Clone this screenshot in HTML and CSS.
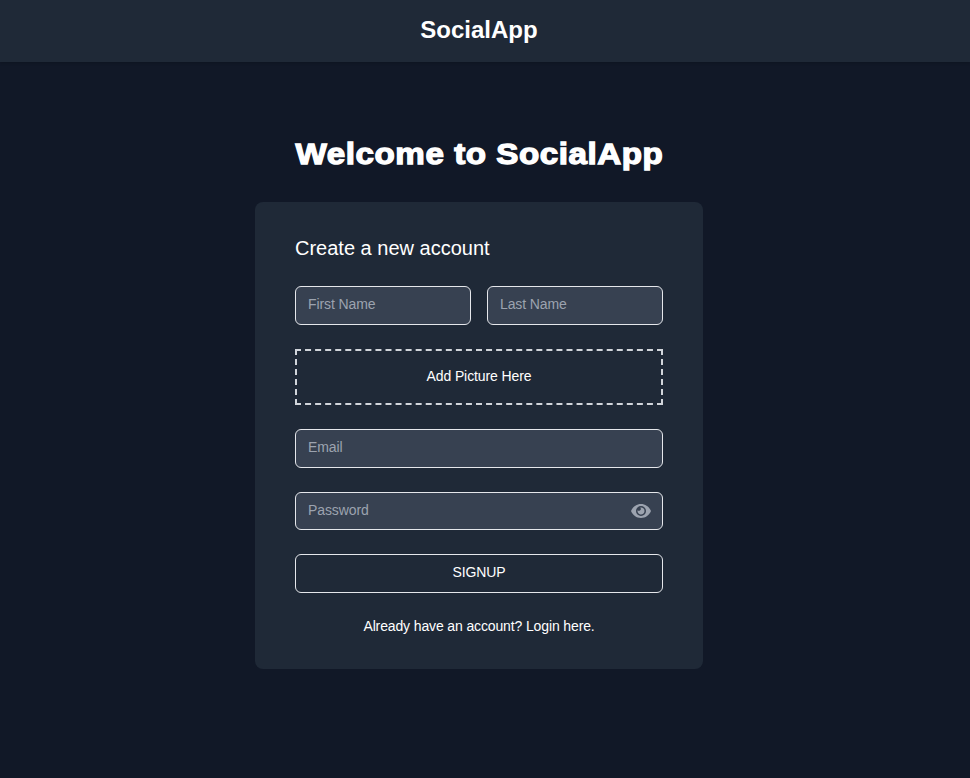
FILE: index.html
```html
<!DOCTYPE html>
<html lang="en">
<head>
<meta charset="utf-8">
<title>SocialApp</title>
<link rel="stylesheet" href="styles.css">
</head>
<body>
<header class="topbar"><span class="brand">SocialApp</span></header>
<main class="page">
  <h1 class="welcome">Welcome to SocialApp</h1>
  <form class="card">
    <h2 class="card-title">Create a new account</h2>
    <div class="names">
      <input class="field" type="text" placeholder="First Name">
      <input class="field" type="text" placeholder="Last Name">
    </div>
    <div class="dropzone">Add Picture Here</div>
    <input class="field" type="email" placeholder="Email">
    <div class="password">
      <input class="field" type="password" placeholder="Password">
      <svg class="eye" viewBox="0 0 20 14" aria-hidden="true">
        <path fill-rule="evenodd" d="M10 0C5.500 0 1.700 2.800 0 7c1.700 4.200 5.500 7 10 7s8.300-2.800 10-7C18.300 2.800 14.500 0 10 0Zm0 12A5 5 0 1 1 10 2a5 5 0 0 1 0 10Z"/>
        <path d="M10 3.500a3.500 3.500 0 1 1-3.400 2.700A1.700 1.700 0 0 0 9.200 3.600Z"/>
      </svg>
    </div>
    <button class="signup" type="button">SIGNUP</button>
    <a class="login">Already have an account? Login here.</a>
  </form>
</main>
</body>
</html>
```
FILE: styles.css
```css
* {
  box-sizing: border-box;
}

body {
  margin: 0;
  min-height: 778px;
  background: #111827;
  color: #fff;
  font: 14px/20px "Liberation Sans", Arial, sans-serif;
}

.topbar {
  height: 62px;
  padding: 14px 12px 0 0;
  background: #1f2937;
  box-shadow: 0 1px 3px rgba(0, 0, 0, 0.2);
  text-align: center;
}

.brand {
  font-size: 24px;
  line-height: 32px;
  font-weight: 700;
}

.page {
  display: flex;
  flex-direction: column;
  align-items: center;
  padding: 73.5px 12px 0 0;
}

.welcome {
  margin: 0 0 30.5px;
  padding-left: 1px;
  font-size: 30px;
  line-height: 36px;
  font-weight: 900;
  letter-spacing: 0.5px;
  -webkit-text-stroke: 1.3px #fff;
  transform: scaleX(1.105);
  white-space: nowrap;
}

.card {
  display: flex;
  flex-direction: column;
  gap: 24px;
  width: 448px;
  padding: 32px 40px;
  border-radius: 8px;
  background: #1f2937;
}

.card-title {
  margin: 0;
  font-size: 20px;
  line-height: 28px;
  font-weight: 400;
}

.names {
  display: grid;
  grid-template-columns: 1fr 1fr;
  gap: 16px;
}

.field,
.signup {
  display: block;
  width: 100%;
  height: 38.5px;
  border: 1px solid #e5e7eb;
  border-radius: 6px;
  font: inherit;
  letter-spacing: -0.1px;
}

.names .field {
  height: 39px;
}

.field {
  padding: 0 12px 3px;
  background: #374151;
  color: #fff;
}

.password .field {
  padding-bottom: 2px;
}

.field::placeholder {
  color: #9ca3af;
  opacity: 1;
}

.dropzone {
  height: 56px;
  padding-top: 15px;
  border: 2px dashed #d1d5db;
  text-align: center;
  letter-spacing: -0.1px;
}

.password {
  position: relative;
}

.eye {
  position: absolute;
  right: 12px;
  top: 12.5px;
  width: 20px;
  height: 14px;
  fill: #9ca3af;
}

.signup {
  padding: 0 0 3px;
  background: transparent;
  color: #fff;
}

.login {
  margin: -1px 0 1px;
  text-align: center;
  letter-spacing: -0.13px;
  color: #fff;
}
```
